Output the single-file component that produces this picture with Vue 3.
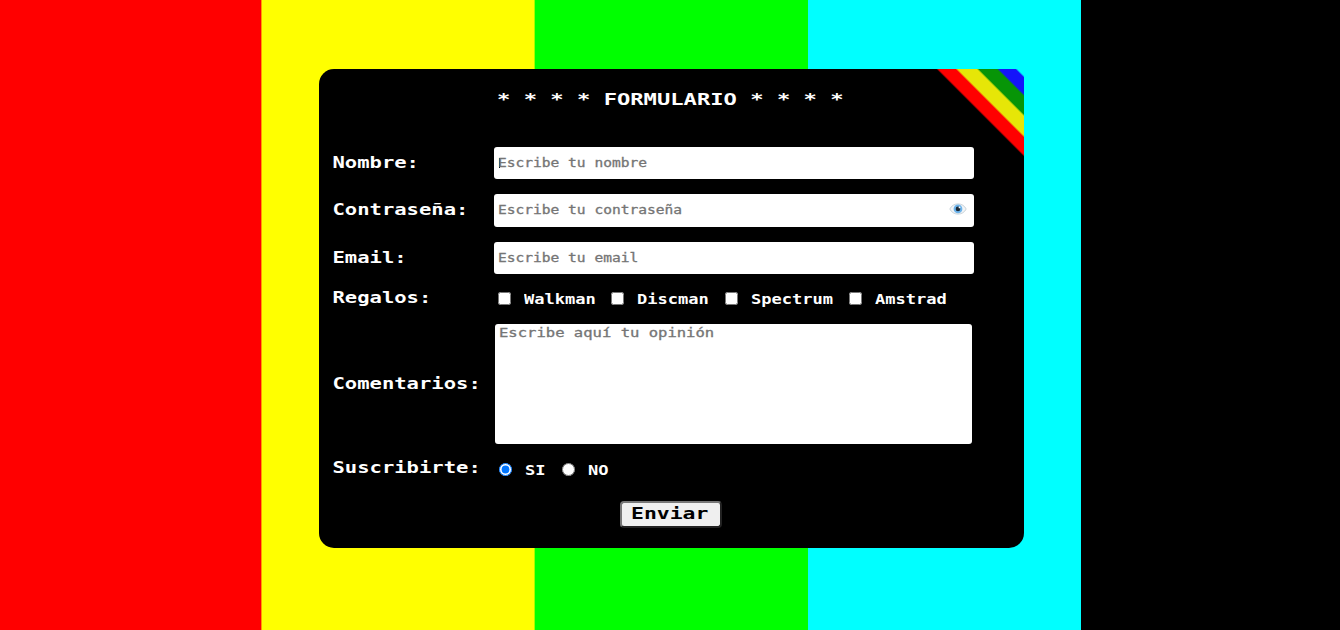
<script setup>
const gifts = ['Walkman', 'Discman', 'Spectrum', 'Amstrad']
</script>

<template>
  <main class="page">
    <form class="card">
      <div class="corner"></div>
      <h1><span class="t title">* * * * FORMULARIO * * * *</span></h1>
      <div class="row r1">
        <label><span class="t lab">Nombre:</span></label>
        <div class="field"><i class="caret"></i><span class="t ph">Escribe tu nombre</span></div>
      </div>
      <div class="row r2">
        <label><span class="t lab">Contraseña:</span></label>
        <div class="field">
          <span class="t ph">Escribe tu contraseña</span>
          <svg class="eye" width="18" height="12" viewBox="0 0 18 12">
            <path d="M.8 6C4-.8 14-.8 17.200 6C14 12.800 4 12.800 .8 6Z" fill="#f2f5f7" stroke="#c3cdd4" stroke-width=".9" />
            <circle cx="9" cy="5.900" r="4.400" fill="#6db3ea" />
            <circle cx="9" cy="5.900" r="2.300" fill="#1c2935" />
            <circle cx="10.500" cy="4.400" r=".9" fill="#fff" />
          </svg>
        </div>
      </div>
      <div class="row r3">
        <label><span class="t lab">Email:</span></label>
        <div class="field"><span class="t ph">Escribe tu email</span></div>
      </div>
      <div class="row r4">
        <label><span class="t lab">Regalos:</span></label>
        <div class="options">
          <div v-for="g in gifts" :key="g" class="opt" :class="g.toLowerCase()">
            <input type="checkbox" /><span class="t small">{{ g }}</span>
          </div>
        </div>
      </div>
      <div class="row r5">
        <label><span class="t lab">Comentarios:</span></label>
        <div class="area"><span class="t ph wide">Escribe aquí tu opinión</span></div>
      </div>
      <div class="row r6">
        <label><span class="t lab">Suscribirte:</span></label>
        <div class="options radios">
          <div class="opt si"><input type="radio" name="sub" checked /><span class="t small">SI</span></div>
          <div class="opt"><input type="radio" name="sub" /><span class="t small">NO</span></div>
        </div>
      </div>
      <button type="button"><span class="t send">Enviar</span></button>
    </form>
  </main>
</template>

<style>
body { margin: 0; overflow: hidden; }
</style>

<style scoped>
* { box-sizing: border-box; }
.page {
  width: 1340px;
  height: 630px;
  padding: 69px 0 0 319px;
  background: linear-gradient(90deg, #f00 261.200px, #ff0 261.700px 534.200px, #0f0 535px 807.500px, #0ff 808.200px 1080.600px, #000 1081.200px);
}
.card {
  position: relative;
  width: 705px;
  height: 479px;
  background: #000;
  border-radius: 15px 0 15px 15px;
  overflow: hidden;
  color: #fff;
  font-family: "DejaVu Sans Mono", monospace;
}
.corner {
  position: absolute;
  top: 0;
  right: 0;
  width: 100px;
  height: 100px;
  background: linear-gradient(225deg, #0ff 4.600px, #1414fa 6.400px 17.600px, #079507 19.400px 31.800px, #e6e607 33.600px 46.900px, #f00 48.700px 60.500px, #000 62.300px);
}
.t {
  display: block;
  white-space: pre;
  transform-origin: 0 50%;
  line-height: 16px;
}
h1 { margin: 0; height: 78px; padding: 23px 0 0 178px; font-weight: normal; }
.title { font-size: 15px; font-weight: bold; transform: scaleX(1.476); }
.lab { font-size: 15px; font-weight: bold; transform: translateX(-.5px) scaleX(1.368); }
.ph { font-size: 12px; color: #757575; -webkit-text-stroke: .3px #757575; transform: scaleX(1.213); }
.wide { transform: scaleX(1.295); }
.small { font-size: 13.500px; font-weight: bold; transform: scaleX(1.263); }
.send { font-size: 15px; font-weight: bold; transform: translateY(-1px) scaleX(1.428); }
.row { display: flex; align-items: center; }
.row label { width: 161px; padding-left: 14px; flex: none; }
.r1 { height: 32px; }
.r2 { height: 33px; margin-top: 15px; }
.r2 label { padding-bottom: 1px; }
.r2 .ph { margin-bottom: 1px; }
.r3 { height: 32px; margin-top: 15px; }
.r4 { height: 50px; }
.r5 { height: 120px; }
.r6 { height: 50px; }
.r4 label, .r6 label { padding-bottom: 2px; }
.field {
  position: relative;
  width: 480px;
  height: 100%;
  margin-left: 14px;
  border-radius: 3px;
  background: #fff;
  display: flex;
  align-items: center;
  padding-left: 4px;
}
.caret { position: absolute; left: 5px; top: 11px; width: 1px; height: 10px; background: #000; }
.eye { position: absolute; right: 7px; top: 9px; }
.area {
  width: 477px;
  height: 120px;
  margin-left: 15px;
  border-radius: 3px;
  background: #fff;
  padding: 1px 0 0 4px;
}
.options { display: flex; margin-left: 18px; }
.opt { display: flex; align-items: center; height: 16px; width: 113px; }
.opt.discman { width: 114px; }
.opt.spectrum { width: 124px; }
.opt.si { width: 63px; }
.opt input { width: 13px; height: 13px; margin: 0 13px 0 0; flex: none; }
.opt input[type="checkbox"] { margin-bottom: 2px; }
.radios { margin-left: 19px; padding-top: 1px; }
button {
  display: block;
  margin: 7px 0 0 301px;
  width: 102px;
  height: 27px;
  padding: 0 0 0 9px;
  border: 2px outset #777;
  border-radius: 4px;
  background: #efefef;
  color: #000;
  font-family: inherit;
  text-align: left;
}
</style>
